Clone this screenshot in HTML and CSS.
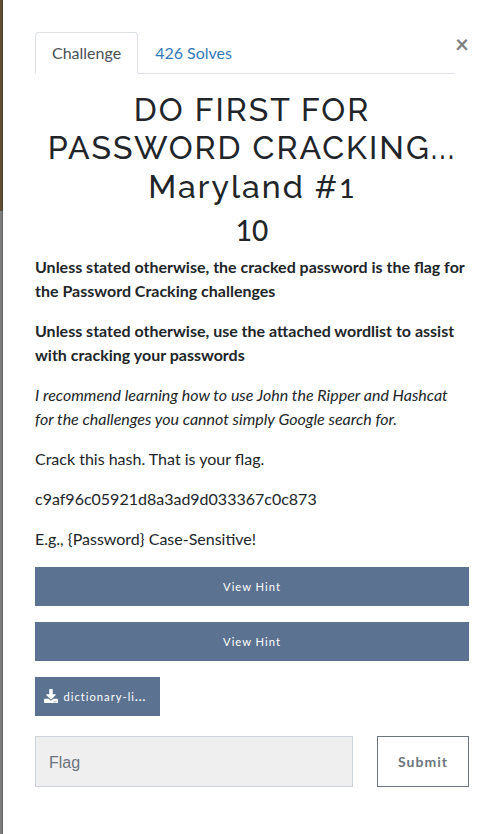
FILE: index.html
```html
<!DOCTYPE html>
<html lang="en">
<head>
<meta charset="utf-8">
<title>Challenge</title>
<link rel="stylesheet" href="styles.css">
</head>
<body>
<div class="modal">
  <button class="close" aria-label="Close">×</button>
  <nav class="tabs">
    <a class="tab active">Challenge</a>
    <a class="tab">426 Solves</a>
  </nav>
  <h2 class="name">DO FIRST FOR<br>PASSWORD CRACKING...<br>Maryland #<span class="numeral">1</span></h2>
  <h3 class="value">10</h3>
  <div class="desc">
    <p><strong>Unless stated otherwise, the cracked password is the flag for<br>the Password Cracking challenges</strong></p>
    <p><strong>Unless stated otherwise, use the attached wordlist to assist<br>with cracking your passwords</strong></p>
    <p><em>I recommend learning how to use John the Ripper and Hashcat<br>for the challenges you cannot simply Google search for.</em></p>
    <p>Crack this hash. That is your flag.</p>
    <p>c9af96c05921d8a3ad9d033367c0c873</p>
    <p>E.g., {Password} Case-Sensitive!</p>
  </div>
  <a class="btn">View Hint</a>
  <a class="btn">View Hint</a>
  <a class="btn file">
    <svg class="icon" viewBox="0 0 512 512"><path fill="currentColor" d="M216 0h80c13.3 0 24 10.700 24 24v168h87.700c17.800 0 26.700 21.500 14.100 34.100L269.700 378.300c-7.500 7.500-19.800 7.500-27.300 0L90.100 226.100c-12.600-12.600-3.700-34.100 14.100-34.100H192V24c0-13.300 10.700-24 24-24zm296 376v112c0 13.300-10.700 24-24 24H24c-13.300 0-24-10.700-24-24V376c0-13.300 10.700-24 24-24h146.700l49 49c20.100 20.100 52.500 20.100 72.600 0l49-49H488c13.300 0 24 10.700 24 24zm-124 88c0-11-9-20-20-20s-20 9-20 20 9 20 20 20 20-9 20-20zm64 0c0-11-9-20-20-20s-20 9-20 20 9 20 20 20 20-9 20-20z"/></svg>
    <span>dictionary-li<b>...</b></span>
  </a>
  <form class="submit-row">
    <input class="flag" placeholder="Flag">
    <button class="submit" type="button">Submit</button>
  </form>
</div>
</body>
</html>
```
FILE: styles.css
```css
* { box-sizing: border-box; }
body {
  margin: 0;
  height: 834px;
  overflow: hidden;
  padding-left: 3px;
  background: linear-gradient(#5f4e33 0 211px, #7d7d7d 211px);
  font: 16px/24px Lato, sans-serif;
  color: #212529;
}
.modal {
  position: relative;
  height: 834px;
  padding: 32px 31px 0 32px;
  background: #fff;
  box-shadow: -1px 0 rgba(0, 0, 0, .2);
}
.close {
  position: absolute;
  top: 32px;
  right: 31px;
  padding: 0;
  border: 0;
  background: none;
  font: 700 24px/24px Lato, sans-serif;
  color: #7f7f7f;
  opacity: .99;
}
.tabs {
  display: flex;
  width: 420px;
  height: 42px;
  border-bottom: 1px solid #dee2e6;
}
.tab {
  height: 42px;
  padding: 8px 16px;
  border: 1px solid transparent;
  color: #337ab7;
}
.tab.active {
  border-color: #dee2e6 #dee2e6 #fff;
  border-radius: 4px 4px 0 0;
  background: #fff;
  color: #495057;
}
.name {
  margin: 17px 0 8px;
  text-align: center;
  white-space: nowrap;
  font: 500 32px/38.4px Raleway, Lato, sans-serif;
  letter-spacing: 2px;
}
.numeral {
  font: 500 27px/1 Lato, sans-serif;
  letter-spacing: 1px;
}
.value {
  margin: 0 0 7px;
  text-align: center;
  font: 500 28px/33.6px Lato, sans-serif;
}
.desc p { margin: 0 0 16px; white-space: nowrap; }
.btn {
  display: flex;
  align-items: center;
  justify-content: center;
  height: 39px;
  margin-bottom: 16px;
  padding-top: 1px;
  background: #5b7290;
  color: #fff;
  font-size: 11.2px;
  letter-spacing: 1px;
}
.file {
  justify-content: flex-start;
  width: 125px;
  gap: 5.5px;
  margin-bottom: 20px;
  padding-left: 9px;
}
.file b { font-weight: 900; letter-spacing: 1.1px; }
.icon { width: 14px; height: 14px; margin-top: -2px; }
.submit-row { display: flex; justify-content: space-between; }
.flag {
  width: 318px;
  height: 51px;
  padding: 3px 13px 0;
  border: 1px solid #ced4da;
  border-radius: 0;
  background: #efefef;
  font: 16px "Liberation Sans", sans-serif;
}
.flag::placeholder { color: #6c757d; }
.submit {
  width: 92px;
  height: 51px;
  padding: 1px 6px;
  border: 1px solid #6c757d;
  background: #fff;
  color: #6c757d;
  font: 700 14px Lato, sans-serif;
  letter-spacing: 1px;
}
```
